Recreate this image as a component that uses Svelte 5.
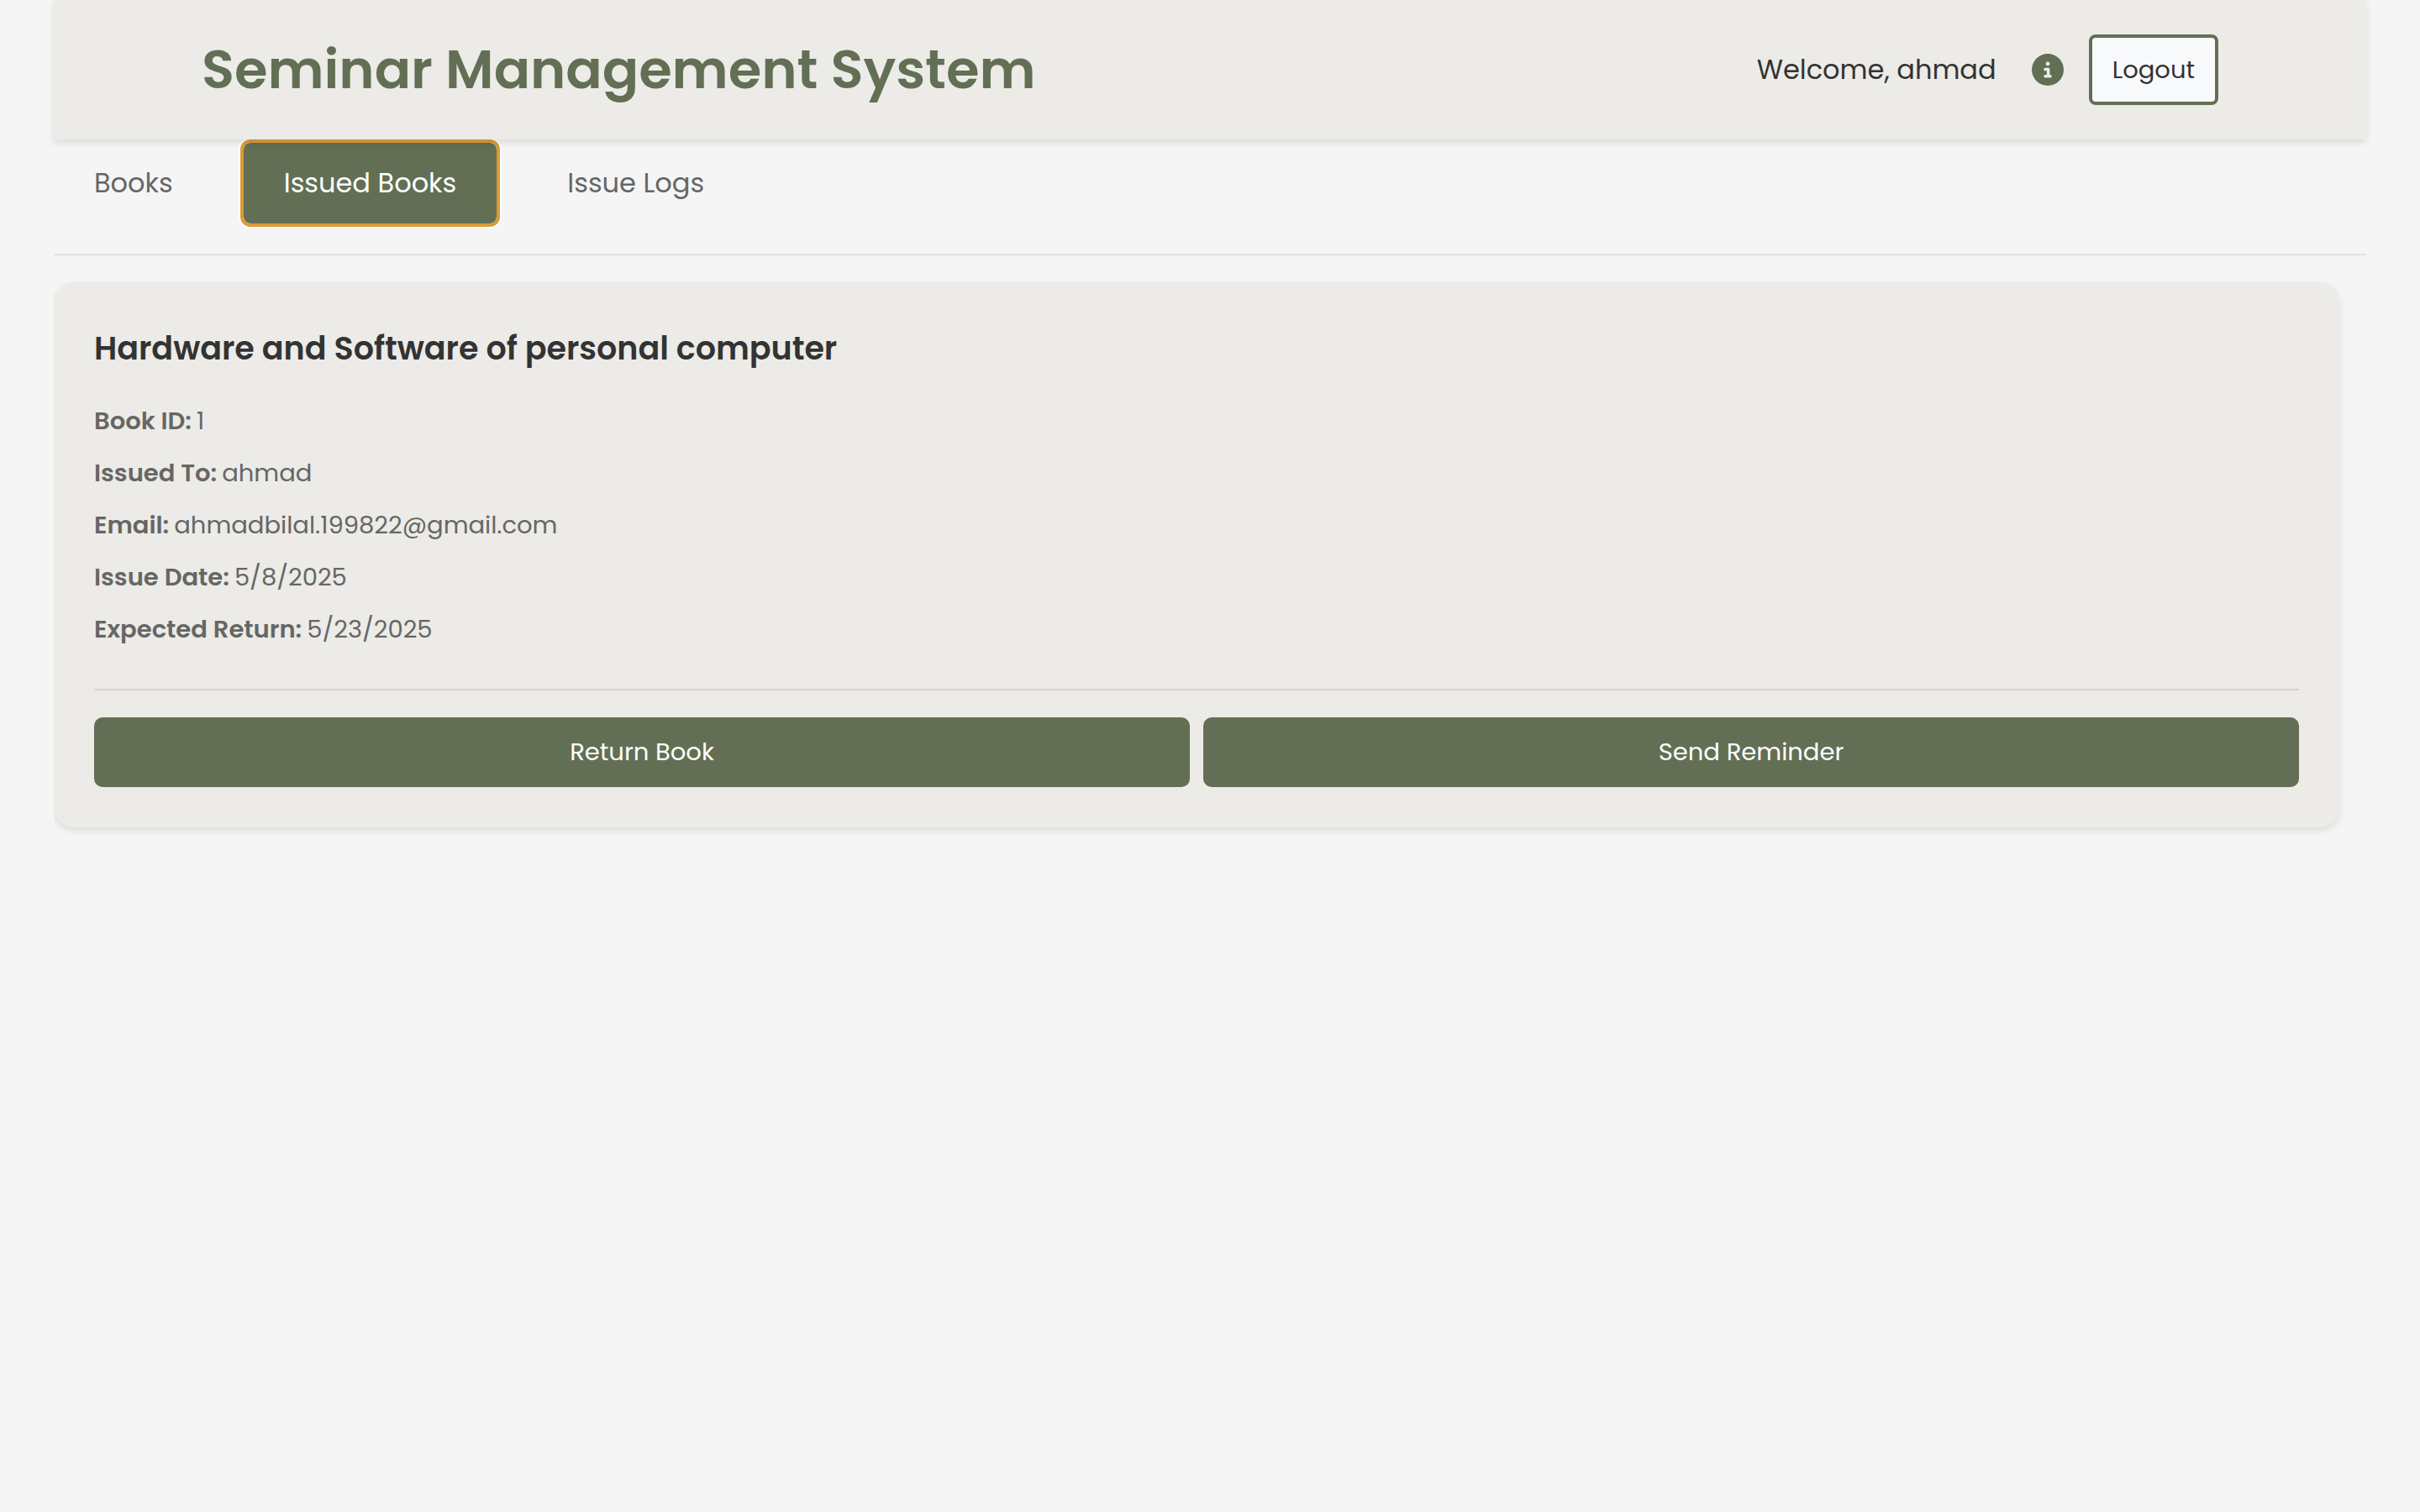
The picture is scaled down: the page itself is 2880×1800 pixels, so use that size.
<script>
  const tabs = ['Books', 'Issued Books', 'Issue Logs'];
  let active = $state('Issued Books');

  const user = 'ahmad';
  const books = [
    {
      title: 'Hardware and Software of personal computer',
      details: [
        ['Book ID:', '1'],
        ['Issued To:', 'ahmad'],
        ['Email:', 'ahmadbilal.199822@gmail.com'],
        ['Issue Date:', '5/8/2025'],
        ['Expected Return:', '5/23/2025'],
      ],
    },
  ];
</script>

<div class="page">
  <header class="header">
    <div class="header-inner">
      <h1>Seminar Management System</h1>
      <div class="account">
        <span class="welcome">Welcome, {user}</span>
        <button class="info" aria-label="Information">
          <svg viewBox="0 0 512 512" aria-hidden="true">
            <path
              d="M256 512A256 256 0 1 0 256 0a256 256 0 1 0 0 512zM216 336h24V272H216c-13.3 0-24-10.7-24-24s10.7-24 24-24h48c13.3 0 24 10.7 24 24v88h8c13.3 0 24 10.7 24 24s-10.7 24-24 24H216c-13.3 0-24-10.7-24-24s10.7-24 24-24zm40-208a32 32 0 1 1 0 64 32 32 0 1 1 0-64z"
            />
          </svg>
        </button>
        <button class="logout">Logout</button>
      </div>
    </div>
  </header>

  <nav class="tabs">
    {#each tabs as tab}
      <button class="tab" class:active={active === tab} onclick={() => (active = tab)}>{tab}</button>
    {/each}
  </nav>

  <main class="list">
    {#each books as book}
      <article class="card">
        <h2>{book.title}</h2>
        <dl class="details">
          {#each book.details as [label, value]}
            <div class="detail">
              <dt>{label}</dt>
              <dd>{value}</dd>
            </div>
          {/each}
        </dl>
        <div class="actions">
          <button class="action">Return Book</button>
          <button class="action">Send Reminder</button>
        </div>
      </article>
    {/each}
  </main>
</div>

<style>
  :global(body) {
    background: #f5f5f5;
  }

  .page {
    --green: #626f54;
    --panel: #ecebe7;
    padding: 0 64px;
    color: #333;
    font-family: Poppins, Inter, sans-serif;
    font-size: 29px;
  }

  button {
    margin: 0;
    border: 0;
    font: inherit;
    cursor: pointer;
  }

  .header {
    position: relative;
    z-index: 1;
    padding: 41px 176px;
    background: var(--panel);
    box-shadow: 0 4px 8px rgba(0, 0, 0, 0.1);
  }

  .header-inner {
    display: flex;
    align-items: center;
    justify-content: space-between;
    max-width: 2400px;
    margin: 0 auto;
  }

  h1 {
    margin: 0;
    color: var(--green);
    font-size: 64px;
    font-weight: 600;
    line-height: 82px;
  }

  .account {
    display: flex;
    align-items: center;
  }

  .welcome {
    margin-right: 42px;
    font-size: 32px;
  }

  .info {
    display: flex;
    margin-right: 30px;
    padding: 0;
    background: none;
  }

  .info svg {
    width: 38px;
    height: 38px;
    fill: var(--green);
  }

  .logout {
    padding: 16px 24px;
    border: 4px solid var(--green);
    border-radius: 8px;
    background: #f8f9fb;
    color: #333;
    line-height: 44px;
  }

  .tabs {
    display: flex;
    gap: 36px;
    padding: 4px 0 36px;
    border-bottom: 2px solid #e0e0e0;
  }

  .tab {
    padding: 24px 48px;
    border-radius: 8px;
    background: none;
    color: #666;
    font-size: 32px;
    line-height: 48px;
  }

  .tab.active {
    outline: 4px solid #dc9b35;
    background: var(--green);
    box-shadow: 0 0 0 6px #fff;
    color: #fff;
  }

  .list {
    overflow: hidden;
    padding: 32px 32px 16px 0;
  }

  .card {
    padding: 48px;
    border-radius: 24px;
    background: var(--panel);
    box-shadow: 0 4px 8px rgba(0, 0, 0, 0.1);
  }

  h2 {
    margin: 0 0 32px;
    font-size: 38px;
    font-weight: 600;
    line-height: 62px;
  }

  .details {
    display: grid;
    gap: 16px;
    margin: 0 0 48px;
    color: #666;
    line-height: 46px;
  }

  .detail {
    display: flex;
    gap: 6px;
  }

  dt {
    font-weight: 600;
  }

  dd {
    margin: 0;
  }

  .actions {
    display: flex;
    gap: 16px;
    padding-top: 32px;
    border-top: 2px solid #d4d3ce;
  }

  .action {
    flex: 1;
    padding: 20px;
    border-radius: 10px;
    background: var(--green);
    color: #fff;
    line-height: 43px;
  }
</style>
